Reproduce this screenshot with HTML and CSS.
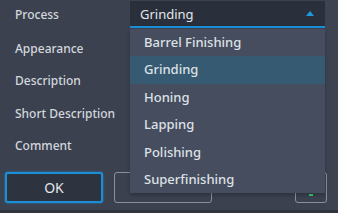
FILE: index.html
```html
<!DOCTYPE html>
<html lang="en">
<head>
    <meta charset="UTF-8">
    <title>Process Properties</title>
    <link rel="stylesheet" href="styles.css">
</head>
<body>
    <div class="dialog">
        <div class="fields">
            <div class="row">
                <span class="label">Process</span>
                <div class="combo">
                    <span class="combo-value">Grinding</span>
                    <span class="combo-arrow"></span>
                </div>
            </div>
            <div class="row"><span class="label">Appearance</span></div>
            <div class="row"><span class="label">Description</span></div>
            <div class="row"><span class="label">Short Description</span></div>
            <div class="row"><span class="label">Comment</span></div>
        </div>

        <div class="buttons">
            <button class="btn btn-primary">OK</button>
            <button class="btn" aria-label="Cancel"></button>
            <span class="spacer"></span>
            <button class="btn btn-small"><span class="led"></span></button>
        </div>

        <ul class="dropdown">
            <li>Barrel Finishing</li>
            <li class="selected">Grinding</li>
            <li>Honing</li>
            <li>Lapping</li>
            <li>Polishing</li>
            <li>Superfinishing</li>
        </ul>
    </div>
    <div class="statusbar"></div>
</body>
</html>
```

FILE: styles.css
```css
body {
    margin: 0;
    width: 338px;
    height: 213px;
    overflow: hidden;
    font-family: "Noto Sans", "Open Sans", sans-serif;
    font-size: 12px;
    color: #d3d7dd;
    background: linear-gradient(to right, #3b414f 325px, #3d4351 325px);
}

.dialog {
    position: relative;
    height: 210px;
}

.row {
    display: flex;
    align-items: center;
    height: 32.5px;
    padding-left: 15px;
}

.label {
    width: 115px;
    padding-bottom: 1px;
    font-weight: 500;
}

.row:first-child .label {
    padding-bottom: 3px;
}

.combo {
    display: flex;
    align-items: center;
    justify-content: space-between;
    box-sizing: border-box;
    width: 195px;
    height: 27px;
    margin-top: -3px;
    padding: 0 11px 0 10px;
    background-color: #2a303b;
    border-bottom: 2px solid #1a8fd6;
    color: #e2e5ea;
    font-size: 13px;
}

.combo-arrow {
    width: 0;
    height: 0;
    border-left: 4px solid transparent;
    border-right: 4px solid transparent;
    border-bottom: 5px solid #1e9be0;
    margin-top: -1px;
}

.buttons {
    display: flex;
    gap: 11px;
    margin-top: 9.5px;
    padding: 0 11px 0 5px;
}

.spacer {
    flex: 1;
}

.btn {
    box-sizing: border-box;
    width: 98px;
    height: 31px;
    background: transparent;
    border: 1px solid #8b919b;
    border-radius: 3px;
    color: #e2e5ea;
    font-family: inherit;
    font-size: 14px;
    padding: 0;
}

.btn-primary {
    background-color: #2d333f;
    border: 2px solid #1a8fd6;
    box-shadow: 0 0 2px #1a8fd6;
}

.btn-small {
    width: 32px;
    display: flex;
    align-items: flex-end;
    justify-content: center;
    padding-bottom: 6px;
}

.led {
    width: 4px;
    height: 2px;
    background-color: #2fd170;
}

.dropdown {
    position: absolute;
    top: 29px;
    left: 130px;
    width: 195px;
    margin: 0;
    padding: 0;
    list-style: none;
    background-color: #454d5e;
    box-shadow: 0 2px 4px rgba(0, 0, 0, 0.25);
}

.dropdown li {
    height: 27.4px;
    line-height: 27px;
    padding-left: 14px;
    font-size: 13px;
    font-weight: 500;
    color: #dde1e6;
}

.dropdown li.selected {
    background-color: #365a71;
}

.statusbar {
    height: 3px;
    background-color: #2f343e;
}
```
